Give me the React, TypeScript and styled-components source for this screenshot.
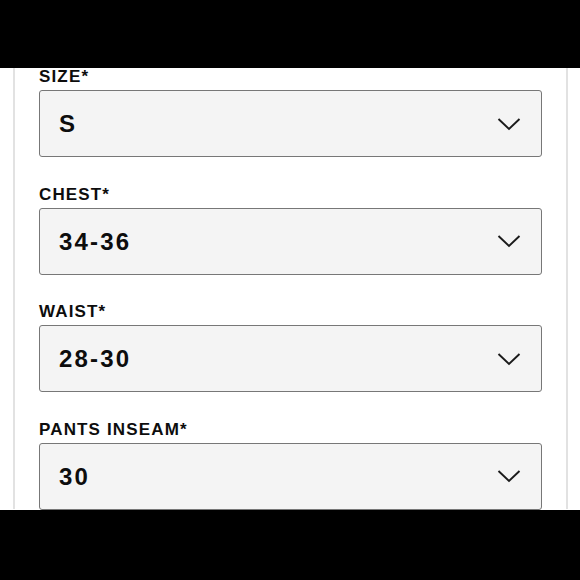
import React from "react";
import styled, { createGlobalStyle } from "styled-components";

const Global = createGlobalStyle`
  html, body { margin: 0; padding: 0; background: #000; }
  * { box-sizing: border-box; }
`;

const Screen = styled.div`
  width: 580px;
  height: 580px;
  display: flex;
  flex-direction: column;
  background: #000;
  font-family: "Liberation Sans", Arial, sans-serif;
`;

const Bar = styled.div<{ $h: number }>`
  height: ${(p) => p.$h}px;
  flex: none;
  background: #000;
`;

const Viewport = styled.div`
  flex: 1;
  background: #fff;
  overflow: hidden;
  padding: 0 12px 0 13px;
`;

const Card = styled.div`
  height: 100%;
  border-left: 2px solid #e2e2e2;
  border-right: 2px solid #e2e2e2;
  padding: 0 24px;
`;

const Form = styled.div`
  display: flex;
  flex-direction: column;
  gap: 27.5px;
  margin-top: -1px;
`;

const Field = styled.div`
  display: flex;
  flex-direction: column;
`;

const Label = styled.div`
  font-size: 17px;
  line-height: 20px;
  font-weight: 700;
  color: #0d0d0d;
  letter-spacing: 1.15px;
  margin-bottom: 3px;
`;

const Select = styled.div`
  height: 67px;
  display: flex;
  align-items: center;
  justify-content: space-between;
  background: #f4f4f4;
  border: 1.5px solid #777;
  border-radius: 3px;
  padding: 0 20px 0 19px;
`;

const Value = styled.span`
  font-size: 24px;
  font-weight: 700;
  color: #0d0d0d;
  letter-spacing: 2.2px;
  margin-top: 1px;
`;

const Chevron = () => (
  <svg width="24" height="14" viewBox="0 0 24 14" fill="none">
    <path d="M1.5 2 L12 12 L22.5 2" stroke="#1a1a1a" strokeWidth="1.9" />
  </svg>
);

const fields = [
  { label: "SIZE*", value: "S" },
  { label: "CHEST*", value: "34-36" },
  { label: "WAIST*", value: "28-30" },
  { label: "PANTS INSEAM*", value: "30" },
];

export default function App() {
  return (
    <Screen>
      <Global />
      <Bar $h={68} />
      <Viewport>
        <Card>
          <Form>
            {fields.map((f) => (
              <Field key={f.label}>
                <Label>{f.label}</Label>
                <Select>
                  <Value>{f.value}</Value>
                  <Chevron />
                </Select>
              </Field>
            ))}
          </Form>
        </Card>
      </Viewport>
      <Bar $h={70} />
    </Screen>
  );
}
